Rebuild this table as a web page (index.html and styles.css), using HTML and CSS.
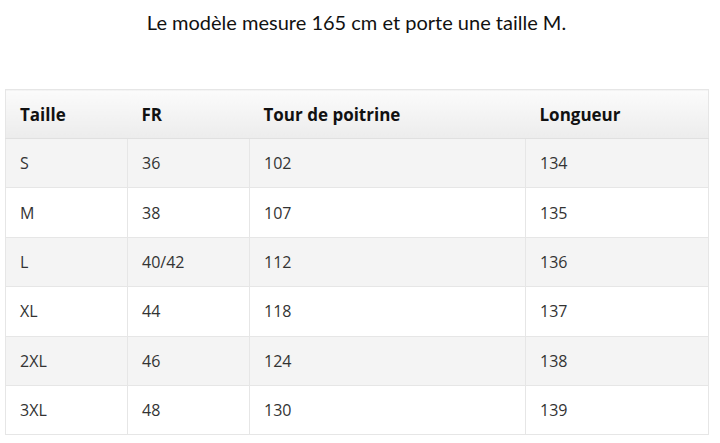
FILE: index.html
```html
<!DOCTYPE html>
<html lang="fr">
<head>
<meta charset="utf-8">
<link rel="stylesheet" href="styles.css">
</head>
<body>
<p class="intro">Le modèle mesure 165 cm et porte une taille M.</p>
<table class="sizes">
  <colgroup>
    <col class="c1"><col class="c2"><col class="c3"><col class="c4">
  </colgroup>
  <thead>
    <tr><th>Taille</th><th>FR</th><th>Tour de poitrine</th><th>Longueur</th></tr>
  </thead>
  <tbody>
    <tr><td>S</td><td>36</td><td>102</td><td>134</td></tr>
    <tr><td>M</td><td>38</td><td>107</td><td>135</td></tr>
    <tr><td>L</td><td>40/42</td><td>112</td><td>136</td></tr>
    <tr><td>XL</td><td>44</td><td>118</td><td>137</td></tr>
    <tr><td>2XL</td><td>46</td><td>124</td><td>138</td></tr>
    <tr><td>3XL</td><td>48</td><td>130</td><td>139</td></tr>
  </tbody>
</table>
</body>
</html>
```
FILE: styles.css
```css
html, body { margin: 0; padding: 0; background: #fff; }
body { padding: 0 12px 0 5px; }
.intro {
  margin: 0;
  padding-top: 10px;
  height: 89px;
  box-sizing: border-box;
  text-align: center;
  font-family: "Lato", sans-serif;
  font-size: 20px;
  color: #111;
}
.sizes {
  width: 703px;
  border-collapse: collapse;
  table-layout: fixed;
  font-family: "Open Sans", sans-serif;
  font-size: 16px;
  border: 1px solid #e6e6e6;
}
.c1 { width: 122px; }
.c2 { width: 122px; }
.c3 { width: 276px; }
.c4 { width: 183px; }
.sizes th {
  text-align: left;
  font-weight: 700;
  font-size: 17px;
  color: #111;
  height: 48px;
  padding: 0 0 0 14px;
  background: linear-gradient(#fbfbfb, #ececec);
  border-bottom: 1px solid #e0e0e0;
}
.sizes td {
  height: 48.4px;
  padding: 0 0 0 14px;
  color: #333;
  border: 1px solid #e6e6e6;
}
.sizes tbody tr:nth-child(odd) td { background: #f4f4f4; }
.sizes tbody tr:nth-child(even) td { background: #fff; }
```
